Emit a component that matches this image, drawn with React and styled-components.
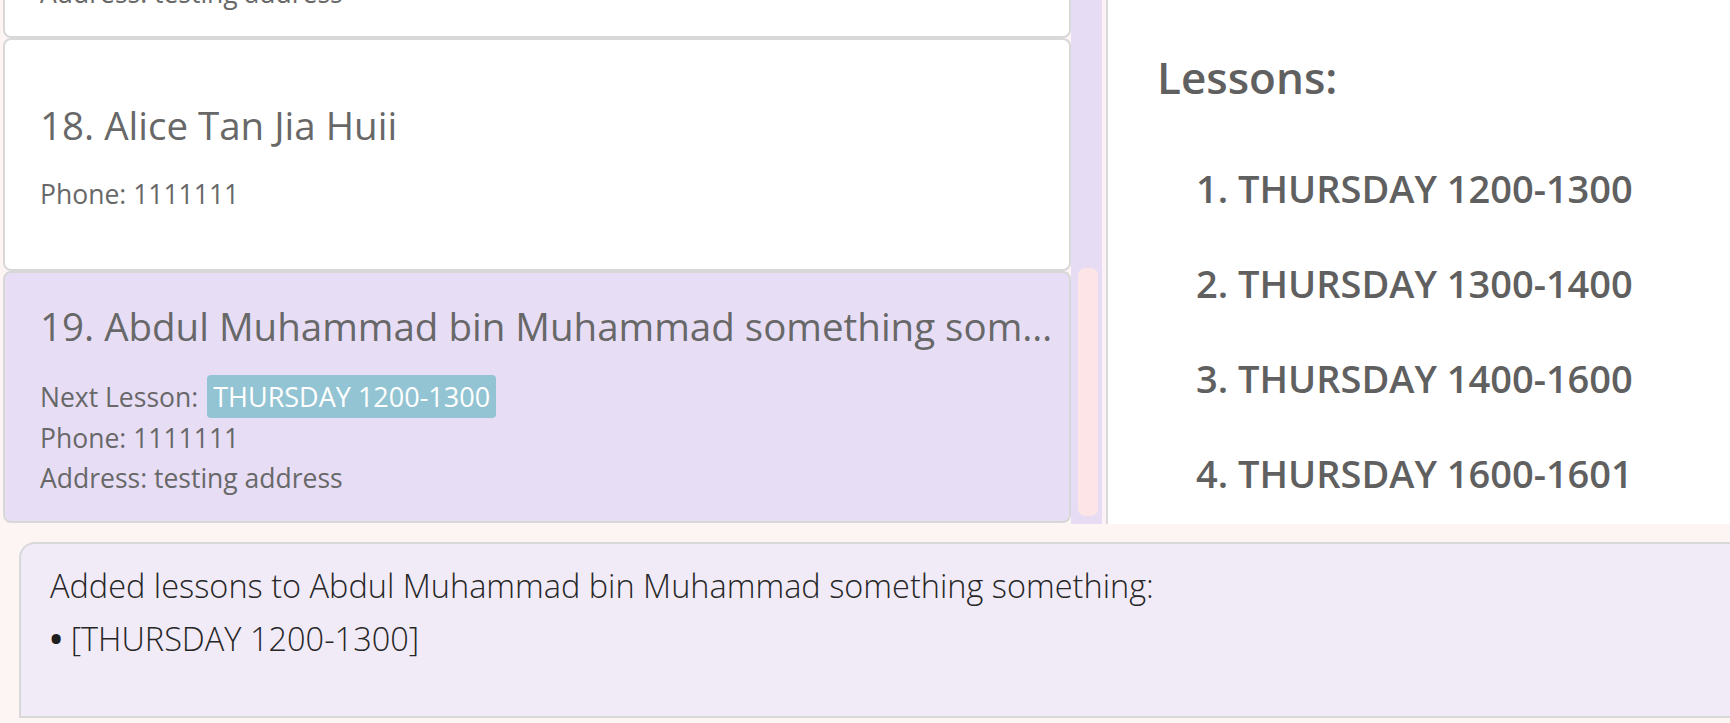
import React, { useLayoutEffect, useRef } from "react";
import styled, { createGlobalStyle } from "styled-components";

const GlobalStyle = createGlobalStyle`
    html, body {
        margin: 0;
        padding: 0;
        background: #fdf4f4;
        overflow: hidden;
    }
    * {
        box-sizing: border-box;
    }
`

const font = `"Open Sans", "Noto Sans", sans-serif`

const Window = styled.div`
    display: grid;
    grid-template-rows: 524px 1fr;
    width: 1730px;
    height: 723px;
    font-family: ${font};
    background: #fdf4f4;
`

const Top = styled.div`
    display: flex;
    min-height: 0;
`

const ListViewport = styled.div`
    flex: 0 0 1071px;
    height: 524px;
    overflow: hidden;
    padding: 0 0 1px 3px;
`

const CardList = styled.div`
    display: flex;
    flex-direction: column;
`

const Card = styled.div`
    display: flex;
    flex-direction: column;
    justify-content: center;
    min-height: ${p => p.$minHeight || 0}px;
    padding: 29px 16px 23px 35px;
    border: 2px solid #d8d8d8;
    border-radius: 8px;
    background: ${p => p.$selected ? "#e7def6" : "#ffffff"};
    color: #686868;
`

const Name = styled.div`
    font-size: 38.5px;
    line-height: 48px;
    white-space: nowrap;
    overflow: hidden;
    text-overflow: ellipsis;
    margin-bottom: 25px;
`

const Field = styled.div`
    display: flex;
    align-items: center;
    font-size: 26.5px;
    line-height: 40px;
`

const LessonTag = styled.span`
    display: inline-flex;
    align-items: center;
    height: 43px;
    margin-left: 9px;
    padding: 0 6px;
    border-radius: 4px;
    background: #93c4d3;
    color: #ffffff;
    font-size: 27px;
`

const ScrollTrack = styled.div`
    flex: 0 0 31px;
    display: flex;
    flex-direction: column;
    justify-content: flex-end;
    padding: 0 4px 8px 7px;
    background: #e6ddf5;
`

const Thumb = styled.div`
    height: 248px;
    border-radius: 7px;
    background: #fde5e7;
`

const Strip = styled.div`
    flex: 0 0 4px;
    background: #fbf1f6;
`

const Panel = styled.div`
    flex: 1;
    padding: 49px 0 0 49px;
    border-left: 2px solid #d8d8d8;
    background: #ffffff;
    color: #606060;
`

const Heading = styled.div`
    font-size: 44px;
    font-weight: 600;
    line-height: 56px;
`

const Lessons = styled.ol`
    display: flex;
    flex-direction: column;
    gap: 47px;
    margin: 59px 0 0 39px;
    padding: 0;
    list-style: none;
`

const LessonItem = styled.li`
    font-size: 38px;
    font-weight: 600;
    line-height: 48px;
`

const Bottom = styled.div`
    padding: 18px 0 5px 19px;
`

const ResultBox = styled.div`
    height: 100%;
    padding: 15px 0 0 29px;
    border: 2px solid #d8d8d8;
    border-right: none;
    border-top-left-radius: 16px;
    background: #f1ebf7;
    color: #262626;
    font-size: 32.5px;
    font-weight: 300;
    line-height: 53px;
`

const Bullet = styled.span`
    font-weight: 700;
    color: #1e1e1e;
`

const persons = [
    { id: 17, name: "Bernice Yu", phone: "1111111", address: "testing address" },
    { id: 18, name: "Alice Tan Jia Huii", phone: "1111111", minHeight: 233 },
    {
        id: 19,
        name: "Abdul Muhammad bin Muhammad something something",
        lesson: "THURSDAY 1200-1300",
        phone: "1111111",
        address: "testing address",
        selected: true,
    },
]

const lessons = [
    "THURSDAY 1200-1300",
    "THURSDAY 1300-1400",
    "THURSDAY 1400-1600",
    "THURSDAY 1600-1601",
]

function PersonCard({ person }) {
    return <Card $selected={person.selected} $minHeight={person.minHeight}>
        <Name>{person.id}. {person.name}</Name>
        {person.lesson && <Field>Next Lesson: <LessonTag>{person.lesson}</LessonTag></Field>}
        <Field>Phone: {person.phone}</Field>
        {person.address && <Field>Address: {person.address}</Field>}
    </Card>
}

export default function App() {
    const viewport = useRef(null)

    // the list is scrolled all the way down, like in the screenshot
    useLayoutEffect(() => {
        const el = viewport.current
        if (el) el.scrollTop = el.scrollHeight
    }, [])

    return <>
        <GlobalStyle />
        <Window>
            <Top>
                <ListViewport ref={viewport}>
                    <CardList>
                        {persons.map(p => <PersonCard key={p.id} person={p} />)}
                    </CardList>
                </ListViewport>
                <ScrollTrack><Thumb /></ScrollTrack>
                <Strip />
                <Panel>
                    <Heading>Lessons:</Heading>
                    <Lessons>
                        {lessons.map((l, i) => <LessonItem key={l}>{i + 1}. {l}</LessonItem>)}
                    </Lessons>
                </Panel>
            </Top>
            <Bottom>
                <ResultBox>
                    <div>Added lessons to Abdul Muhammad bin Muhammad something something:</div>
                    <div><Bullet>•</Bullet> [THURSDAY 1200-1300]</div>
                </ResultBox>
            </Bottom>
        </Window>
    </>
}
